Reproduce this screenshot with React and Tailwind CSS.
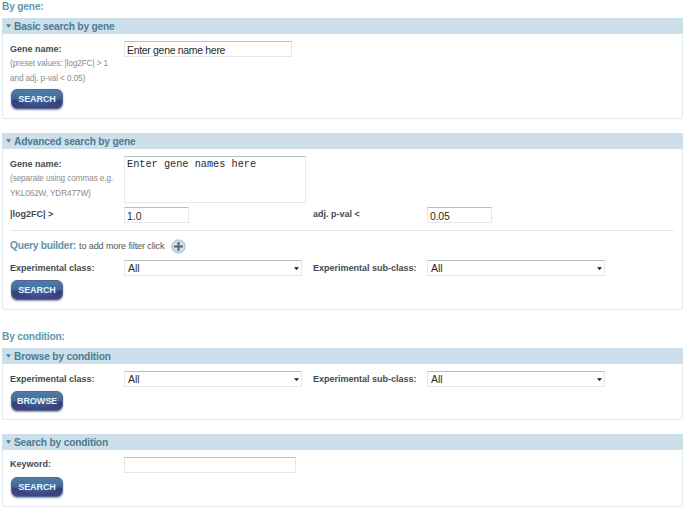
const controlBorder =
  'border border-[#e3e8eb] border-t-[#b9c0c4] bg-white text-[#2b2b2b] outline-none';

function Panel({ title, className, children }) {
  return (
    <section className={`flex flex-col rounded-b-[3px] border border-t-0 border-[#e1eaee] ${className}`}>
      <h2 className="-mx-px flex h-4 shrink-0 items-center bg-[#cddfea] pt-px pl-[4px] text-[10.2px] font-bold tracking-[-0.18px] text-[#4b7d90]">
        <svg className="mr-[3px] mb-[2px] h-[4px] w-[5px]" viewBox="0 0 5 4">
          <path d="M0 .3h5L2.5 3.7z" fill="#4b7d90" />
        </svg>
        {title}
      </h2>
      <div className="flex flex-1 flex-col pl-[7px] pr-[8px]">{children}</div>
    </section>
  );
}

function Label({ children, className = 'w-[114px]' }) {
  return <div className={`shrink-0 text-[9px] font-bold text-[#444a4e] ${className}`}>{children}</div>;
}

function Hint({ children }) {
  return <p className="w-[114px] pt-[3px] text-[8.2px] leading-[14.5px] tracking-[-0.09px] whitespace-nowrap text-[#8b8b8b]">{children}</p>;
}

function Input({ value, className }) {
  return <input type="text" defaultValue={value} className={`pt-px text-[10.5px] ${controlBorder} ${className}`} />;
}

function Select() {
  return (
    <button type="button" className={`flex h-4 w-[178px] shrink-0 items-center justify-between pr-[2px] pl-[3px] text-[10.5px] ${controlBorder}`}>
      <span className="pt-px">All</span>
      <svg className="h-[3px] w-[5px]" viewBox="0 0 5 3">
        <path d="M0 .2h5L2.5 2.9z" fill="#111" />
      </svg>
    </button>
  );
}

function Action({ children, className }) {
  return (
    <button
      type="button"
      className={`ml-px flex h-[20px] w-[52px] items-center justify-center rounded-[6px] border border-[#52678f] bg-[radial-gradient(ellipse_at_50%_45%,rgba(63,127,174,0.9)_0%,rgba(63,127,174,0)_65%),linear-gradient(#5579a5_0%,#41689a_48%,#363f80_58%,#46437f_100%)] pt-px text-[9px] font-bold tracking-[-0.1px] text-[#e9f3fb] shadow-[0_1px_2px_#8b95b0] ${className}`}
    >
      {children}
    </button>
  );
}

function ClassFilters() {
  return (
    <div className="flex items-center">
      <Label className="w-[114px] pt-[2px]">Experimental class:</Label>
      <Select />
      <Label className="ml-[11px] w-[114px] pt-[2px] whitespace-nowrap">Experimental sub-class:</Label>
      <Select />
    </div>
  );
}

function GroupTitle({ children, className }) {
  return <h1 className={`text-[10.2px] leading-[12px] font-bold tracking-[-0.18px] text-[#6197ab] ${className}`}>{children}</h1>;
}

export default function App() {
  return (
    <main className="flex h-[512px] w-[687px] flex-col overflow-hidden bg-white pr-[4px] pl-[2px] font-['Liberation_Sans',Arial,sans-serif]">
      <GroupTitle className="mt-px mb-[5px]">By gene:</GroupTitle>
      <Panel title="Basic search by gene" className="h-[101px]">
        <div className="mt-[7px] flex items-start">
          <div className="w-[114px]">
            <Label className="pt-[3px] leading-[10px]">Gene name:</Label>
            <Hint>(preset values: |log2FC| &gt; 1<br />and adj. p-val &lt; 0.05)</Hint>
          </div>
          <Input value="Enter gene name here" className="h-[16px] w-[168px] px-[2px] tracking-[-0.32px]" />
        </div>
        <Action className="mt-[3px]">SEARCH</Action>
      </Panel>

      <Panel title="Advanced search by gene" className="mt-[14px] h-[177px]">
        <div className="mt-[7px] flex h-[51px] items-start">
          <div className="w-[114px]">
            <Label className="pt-[3px] leading-[10px]">Gene name:</Label>
            <Hint>(separate using commas e.g.<br />YKL062W, YDR477W)</Hint>
          </div>
          <textarea
            defaultValue="Enter gene names here"
            className={`h-[47px] w-[182px] resize-none px-[2px] pt-px font-['Liberation_Mono',monospace] text-[10.25px] leading-[12px] ${controlBorder}`}
          />
        </div>
        <div className="flex items-center">
          <Label>|log2FC| &gt;</Label>
          <Input value="1.0" className="h-[16px] w-[65px] px-[2px]" />
          <Label className="ml-[124px] w-[114px]">adj. p-val &lt;</Label>
          <Input value="0.05" className="h-[16px] w-[65px] px-[2px] tracking-[-0.2px]" />
        </div>
        <hr className="mt-[7px] border-[#e2e7e9]" />
        <div className="mt-[7px] mb-[6px] flex h-[16px] items-center">
          <span className="text-[10.2px] font-bold tracking-[-0.26px] text-[#5c94aa]">Query builder:</span>
          <span className="ml-[3px] pt-px text-[9px] tracking-[-0.09px] text-[#505557]">to add more filter click</span>
          <svg className="ml-[7px] h-[15px] w-[15px]" viewBox="0 0 15 15">
            <circle cx="7.5" cy="7.5" r="6.6" fill="#d0e0e9" stroke="#a5b8c4" />
            <path d="M7.5 3v9M3 7.5h9" stroke="#536878" strokeWidth="2" />
          </svg>
        </div>
        <ClassFilters />
        <Action className="mt-[4px]">SEARCH</Action>
      </Panel>

      <GroupTitle className="mt-[21px] mb-[5px]">By condition:</GroupTitle>
      <Panel title="Browse by condition" className="h-[72px]">
        <div className="mt-[7px]">
          <ClassFilters />
        </div>
        <Action className="mt-[4px]">BROWSE</Action>
      </Panel>

      <Panel title="Search by condition" className="mt-[14px] h-[73px]">
        <div className="mt-[7px] flex items-center">
          <Label>Keyword:</Label>
          <Input value="" className="h-[16px] w-[172px] px-[2px]" />
        </div>
        <Action className="mt-[4px]">SEARCH</Action>
      </Panel>
    </main>
  );
}
